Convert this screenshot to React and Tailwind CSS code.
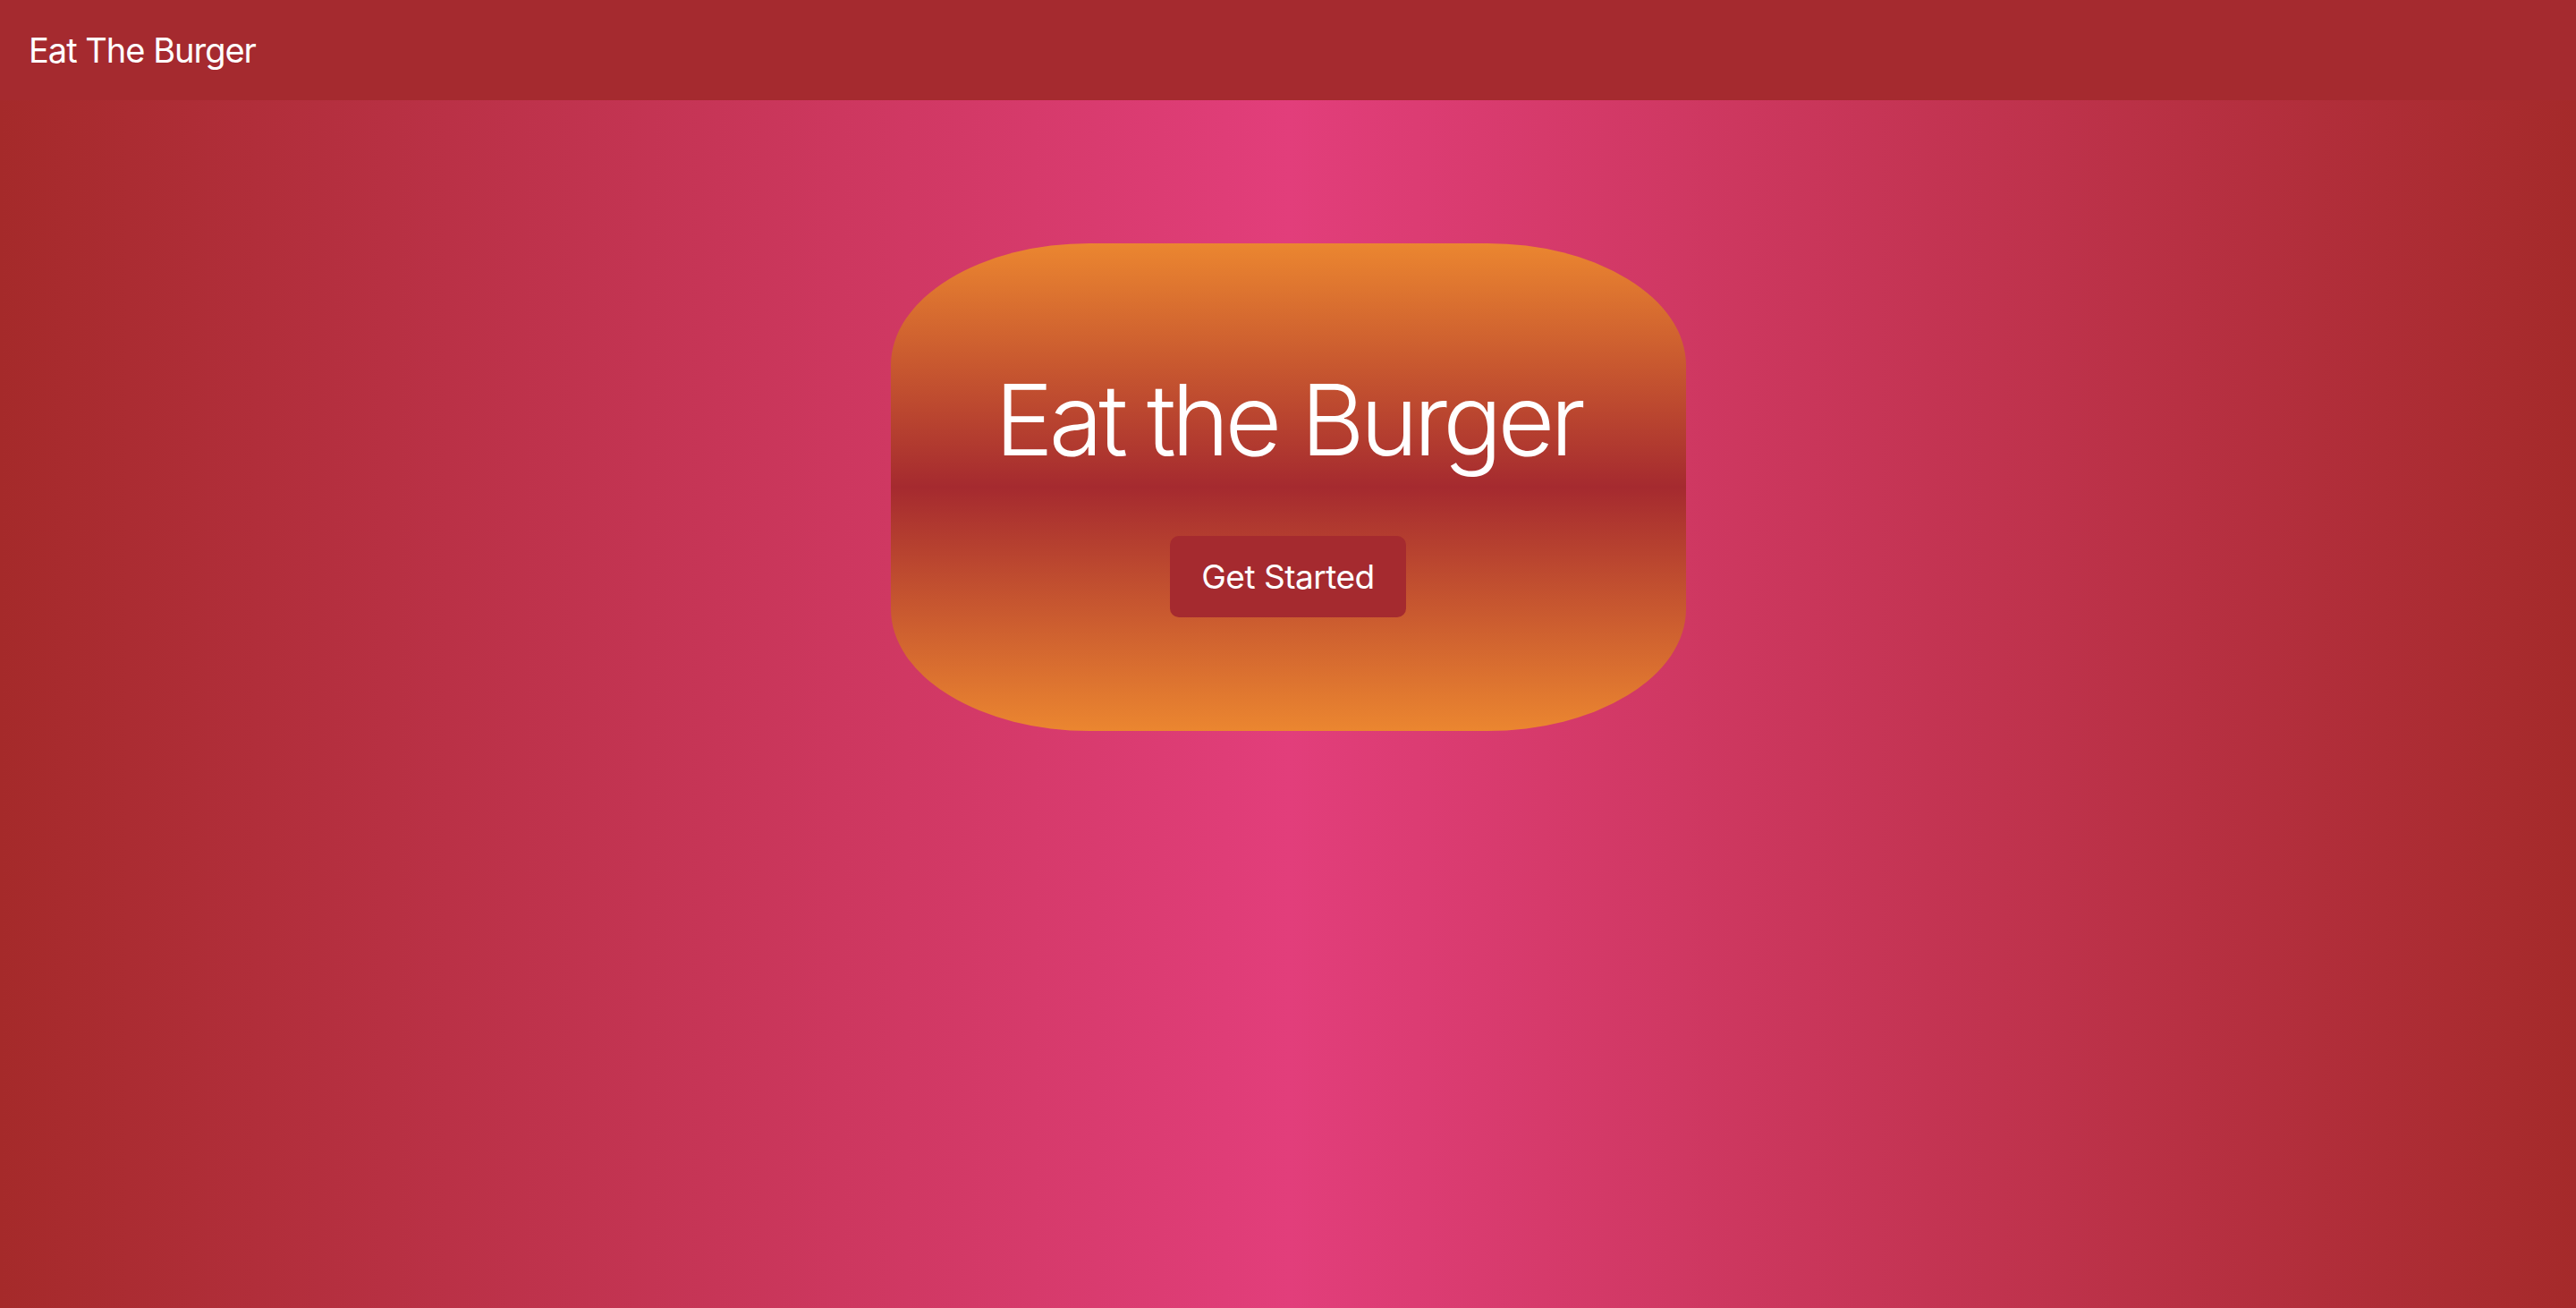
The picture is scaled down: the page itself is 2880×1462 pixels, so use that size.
export default function App() {
  return (
    <div
      className="min-h-screen w-full flex flex-col bg-[linear-gradient(to_right,#a52a2a_0%,#e23e7b_50%,#a52a2a_100%)]"
      style={{ fontFamily: "Inter, 'Liberation Sans', sans-serif" }}
    >
      <nav className="h-[112px] w-full bg-[#a52a2f] flex items-center px-[32px]">
        <span className="text-white text-[38px] leading-none tracking-[-1px]">Eat The Burger</span>
      </nav>
      <main className="flex-1 flex justify-center pt-[160px]">
        <div className="w-[889px] h-[545px] rounded-[25%] bg-[linear-gradient(to_bottom,#eb8630_0%,#a52a2f_50%,#eb8630_100%)] flex flex-col items-center pt-[131px]">
          <h1 className="text-white text-[110px] font-light leading-[1.2] tracking-[-5px] m-0">Eat the Burger</h1>
          <button className="mt-[64px] h-[91px] w-[264px] rounded-[10px] bg-[#a52a2f] text-white text-[37px] leading-none tracking-[-0.5px]">
            Get Started
          </button>
        </div>
      </main>
    </div>
  );
}
